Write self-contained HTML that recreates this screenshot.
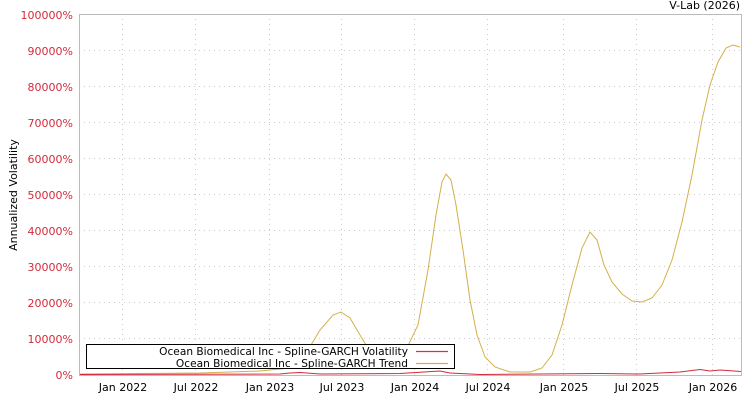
<!DOCTYPE html><html><head><style>
body{margin:0;width:750px;height:400px;background:#fff;font-family:"DejaVu Sans","Liberation Sans",sans-serif;overflow:hidden}
</style></head><body>
<svg width="750" height="400" xmlns="http://www.w3.org/2000/svg" font-family="DejaVu Sans, Liberation Sans, sans-serif" font-size="11">
<text x="740" y="9" text-anchor="end" fill="#000">V-Lab (2026)</text>
<g stroke="#ccc" stroke-dasharray="1,4" stroke-width="1">
<line x1="79" x2="741" y1="50.5" y2="50.5"/><line x1="79" x2="741" y1="86.5" y2="86.5"/><line x1="79" x2="741" y1="122.5" y2="122.5"/><line x1="79" x2="741" y1="158.5" y2="158.5"/><line x1="79" x2="741" y1="194.5" y2="194.5"/><line x1="79" x2="741" y1="230.5" y2="230.5"/><line x1="79" x2="741" y1="266.5" y2="266.5"/><line x1="79" x2="741" y1="302.5" y2="302.5"/><line x1="79" x2="741" y1="338.5" y2="338.5"/>
<line x1="122.5" x2="122.5" y1="14" y2="375"/><line x1="195.5" x2="195.5" y1="14" y2="375"/><line x1="269.5" x2="269.5" y1="14" y2="375"/><line x1="341.5" x2="341.5" y1="14" y2="375"/><line x1="414.5" x2="414.5" y1="14" y2="375"/><line x1="487.5" x2="487.5" y1="14" y2="375"/><line x1="563.5" x2="563.5" y1="14" y2="375"/><line x1="636.5" x2="636.5" y1="14" y2="375"/><line x1="712.5" x2="712.5" y1="14" y2="375"/>
</g>
<rect x="79.5" y="14.5" width="662" height="361" fill="none" stroke="#bbb"/>
<g fill="#d22b3c" text-anchor="end">
<text x="73" y="19">100000%</text><text x="73" y="55">90000%</text><text x="73" y="91">80000%</text><text x="73" y="127">70000%</text><text x="73" y="163">60000%</text><text x="73" y="199">50000%</text><text x="73" y="235">40000%</text><text x="73" y="271">30000%</text><text x="73" y="307">20000%</text><text x="73" y="343">10000%</text><text x="73" y="379">0%</text>
</g>
<text transform="translate(17,195) rotate(-90)" text-anchor="middle" fill="#000">Annualized Volatility</text>
<g text-anchor="middle" fill="#000">
<text x="123" y="391">Jan 2022</text><text x="196" y="391">Jul 2022</text><text x="270" y="391">Jan 2023</text><text x="342" y="391">Jul 2023</text><text x="415" y="391">Jan 2024</text><text x="488" y="391">Jul 2024</text><text x="564" y="391">Jan 2025</text><text x="637" y="391">Jul 2025</text><text x="713" y="391">Jan 2026</text>
</g>
<path d="M80,374 L200,373 L260,371 L290,368 L305,355 L320,330 L333,315 L341,312 L350,318 L360,335 L372,355 L390,366 L405,352 L418,325 L428,270 L436,215 L442,182 L446,174 L451,180 L456,205 L463,250 L470,300 L477,335 L485,357 L495,367 L510,372 L530,372 L542,368 L552,355 L562,325 L572,285 L582,248 L590,232 L597,240 L604,265 L612,282 L622,294 L632,301 L642,302 L652,298 L662,285 L672,260 L682,222 L692,175 L702,120 L710,85 L718,62 L726,48 L733,45 L740,47" fill="none" stroke="#d4b04a" stroke-width="1"/>
<path d="M80,374.5 L280,374 L290,373 L300,372.5 L320,374 L400,373.5 L440,371 L450,373 L480,374.5 L600,373.5 L640,374 L680,372 L700,369.5 L710,371 L720,370 L741,371.5" fill="none" stroke="#d22b3c" stroke-width="1"/>
<rect x="86.5" y="344.5" width="368" height="24" fill="#fff" stroke="#000"/>
<g font-size="10.6" fill="#000" text-anchor="end">
<text x="408" y="355">Ocean Biomedical Inc - Spline-GARCH Volatility</text>
<text x="408" y="367">Ocean Biomedical Inc - Spline-GARCH Trend</text>
</g>
<line x1="416" x2="448" y1="351.5" y2="351.5" stroke="#e0303f" stroke-width="1.2"/>
<line x1="416" x2="448" y1="363.5" y2="363.5" stroke="#d4b04a" stroke-width="1.2"/>
</svg>
</body></html>
